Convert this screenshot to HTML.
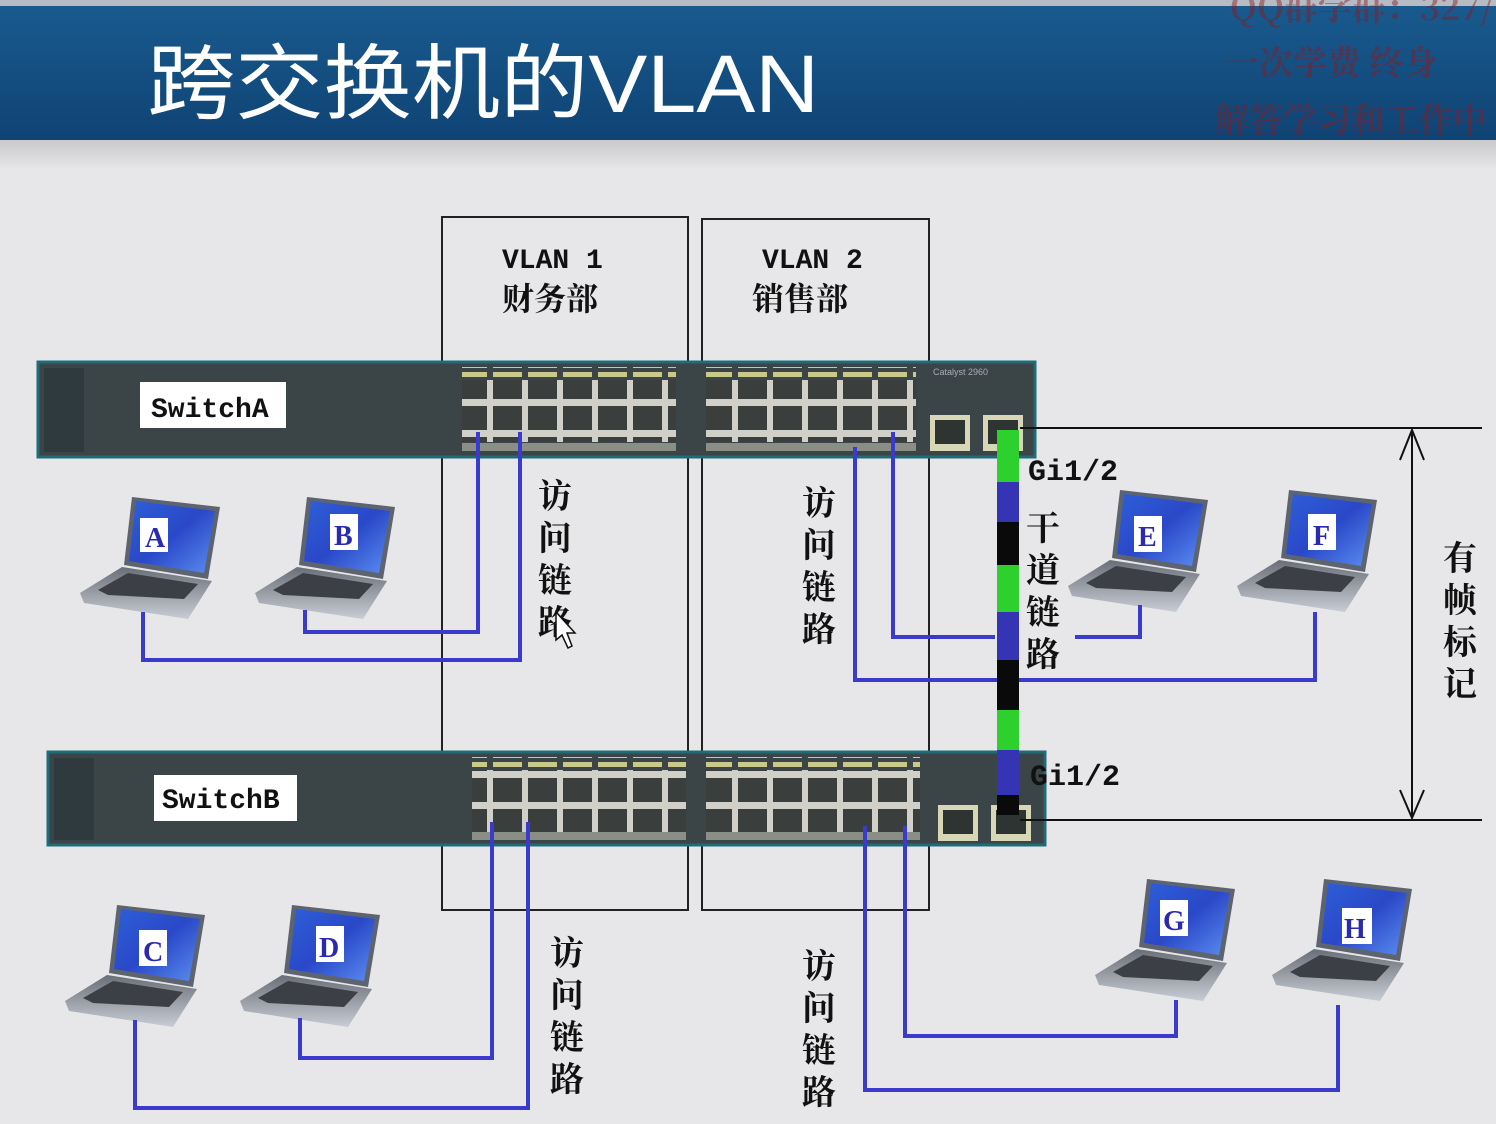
<!DOCTYPE html>
<html><head><meta charset="utf-8"><style>
html,body{margin:0;padding:0;}
body{width:1496px;height:1124px;overflow:hidden;background:#e7e7e9;}
svg{display:block}
.cj{font-family:"Liberation Serif","Noto Serif CJK SC","Noto Sans CJK SC",serif;font-weight:bold;}
.mono{font-family:"Liberation Mono","DejaVu Sans Mono",monospace;font-weight:bold;}
</style></head><body>
<svg width="1496" height="1124" viewBox="0 0 1496 1124" xmlns="http://www.w3.org/2000/svg">
<defs>
<linearGradient id="hdr" x1="0" y1="0" x2="0" y2="1">
<stop offset="0" stop-color="#195a8e"/><stop offset="1" stop-color="#0f4374"/></linearGradient>
<linearGradient id="shade" x1="0" y1="0" x2="0" y2="1">
<stop offset="0" stop-color="#c9c9cb"/><stop offset="1" stop-color="#e7e7e9"/></linearGradient>
<linearGradient id="scr" x1="0" y1="0" x2="1" y2="1">
<stop offset="0" stop-color="#2e5fd8"/><stop offset=".5" stop-color="#2a48c8"/><stop offset="1" stop-color="#5b8df0"/></linearGradient>
<linearGradient id="base" x1="0" y1="0" x2="0" y2="1">
<stop offset="0" stop-color="#6a6e78"/><stop offset="1" stop-color="#c8ccd4"/></linearGradient>
<pattern id="port" width="35" height="31" patternUnits="userSpaceOnUse">
<rect x="0" y="0" width="35" height="31" fill="#d0d0c8"/>
<rect x="3" y="3" width="29" height="24" fill="#3a3e3c"/>
</pattern>
<pattern id="led" width="35" height="10" patternUnits="userSpaceOnUse">
<rect x="3" y="2" width="29" height="6" fill="#c9c98a"/>
</pattern>
<g id="lap">
<polygon points="0,98 42,72 132,86 108,124 4,108" fill="url(#base)"/>
<polygon points="18,95 48,78 118,89 104,104 28,100" fill="#3c3f46"/>
<polygon points="52,2 140,12 128,84 44,70" fill="#5d6470"/>
<polygon points="56,6 135,16 124,78 49,66" fill="url(#scr)"/>
</g>
</defs>
<rect x="0" y="0" width="1496" height="8" fill="#b7bbc3"/>
<rect x="0" y="6" width="1496" height="134" fill="url(#hdr)"/>
<rect x="0" y="140" width="1496" height="30" fill="url(#shade)"/>
<text x="147" y="112" fill="#ffffff" font-family="Liberation Sans,'Noto Sans CJK SC',sans-serif" font-size="82" textLength="672" lengthAdjust="spacingAndGlyphs">跨交换机的VLAN</text>
<g fill="#8a1a20" opacity=".45" font-family="'Noto Serif CJK SC',serif" font-size="34" font-weight="bold">
<text x="1230" y="20">QQ群学群：327/</text>
<text x="1225" y="75">一次学费  终身</text>
<text x="1215" y="132">解答学习和工作中</text></g>

<rect x="442" y="217" width="246" height="693" fill="none" stroke="#222" stroke-width="2"/>
<rect x="702" y="219" width="227" height="691" fill="none" stroke="#222" stroke-width="2"/>
<text x="502" y="268" class="mono" font-size="28" fill="#111">VLAN 1</text>
<text x="502" y="310" class="cj" font-size="32" fill="#111">财务部</text>
<text x="762" y="268" class="mono" font-size="28" fill="#111">VLAN 2</text>
<text x="752" y="310" class="cj" font-size="32" fill="#111">销售部</text>

<rect x="38" y="362" width="997" height="95" fill="#3b4548" stroke="#1f6c78" stroke-width="3"/>
<rect x="44" y="368" width="40" height="84" fill="#2e3a3e"/>
<rect x="140" y="382" width="146" height="46" fill="#fff"/>
<text x="151" y="417" class="mono" font-size="28" fill="#111">SwitchA</text>
<rect x="462" y="367" width="214" height="10" fill="url(#led)"/>
<rect x="706" y="367" width="210" height="10" fill="url(#led)"/>
<rect x="462" y="380" width="214" height="62" fill="url(#port)"/>
<rect x="706" y="380" width="210" height="62" fill="url(#port)"/>
<rect x="462" y="443" width="214" height="8" fill="#8a8f86"/>
<rect x="706" y="443" width="210" height="8" fill="#8a8f86"/>
<rect x="930" y="415" width="40" height="36" fill="#d7d7b8"/><rect x="935" y="420" width="30" height="24" fill="#2e3432"/>
<rect x="983" y="415" width="40" height="36" fill="#d7d7b8"/><rect x="988" y="420" width="30" height="24" fill="#2e3432"/>
<text x="933" y="375" font-size="9" fill="#aab" font-family="Liberation Sans,sans-serif">Catalyst 2960</text>

<rect x="48" y="752" width="997" height="93" fill="#3b4548" stroke="#1f6c78" stroke-width="3"/>
<rect x="54" y="758" width="40" height="82" fill="#2e3a3e"/>
<rect x="154" y="775" width="143" height="46" fill="#fff"/>
<text x="162" y="808" class="mono" font-size="28" fill="#111">SwitchB</text>
<rect x="472" y="757" width="214" height="10" fill="url(#led)"/>
<rect x="706" y="757" width="214" height="10" fill="url(#led)"/>
<rect x="472" y="770" width="214" height="62" fill="url(#port)"/>
<rect x="706" y="770" width="214" height="62" fill="url(#port)"/>
<rect x="472" y="832" width="214" height="8" fill="#8a8f86"/>
<rect x="706" y="832" width="214" height="8" fill="#8a8f86"/>
<rect x="938" y="805" width="40" height="36" fill="#d7d7b8"/><rect x="943" y="810" width="30" height="24" fill="#2e3432"/>
<rect x="991" y="805" width="40" height="36" fill="#d7d7b8"/><rect x="996" y="810" width="30" height="24" fill="#2e3432"/>

<use href="#lap" x="80" y="495"/><rect x="140" y="518" width="28" height="34" fill="#fff"/><text x="145" y="547" class="cj" font-size="28" fill="#2a2ab0">A</text>
<use href="#lap" x="255" y="495"/><rect x="330" y="514" width="28" height="36" fill="#fff"/><text x="334" y="545" class="cj" font-size="28" fill="#2a2ab0">B</text>
<use href="#lap" x="1068" y="488"/><rect x="1134" y="516" width="28" height="36" fill="#fff"/><text x="1138" y="546" class="cj" font-size="28" fill="#2a2ab0">E</text>
<use href="#lap" x="1237" y="488"/><rect x="1308" y="514" width="28" height="36" fill="#fff"/><text x="1313" y="545" class="cj" font-size="28" fill="#2a2ab0">F</text>
<use href="#lap" x="65" y="903"/><rect x="139" y="930" width="28" height="36" fill="#fff"/><text x="143" y="961" class="cj" font-size="28" fill="#2a2ab0">C</text>
<use href="#lap" x="240" y="903"/><rect x="316" y="926" width="28" height="36" fill="#fff"/><text x="319" y="957" class="cj" font-size="28" fill="#2a2ab0">D</text>
<use href="#lap" x="1095" y="877"/><rect x="1160" y="900" width="28" height="36" fill="#fff"/><text x="1163" y="930" class="cj" font-size="28" fill="#2a2ab0">G</text>
<use href="#lap" x="1272" y="877"/><rect x="1342" y="908" width="30" height="36" fill="#fff"/><text x="1344" y="938" class="cj" font-size="28" fill="#2a2ab0">H</text>

<g fill="none" stroke="#3a3acc" stroke-width="4">
<polyline points="143,612 143,660 520,660 520,432"/>
<polyline points="305,610 305,632 478,632 478,432"/>
<polyline points="893,432 893,637 995,637"/>
<polyline points="1075,637 1140,637 1140,605"/>
<polyline points="855,447 855,680 1315,680 1315,612"/>
<polyline points="135,1020 135,1108 528,1108 528,822"/>
<polyline points="300,1018 300,1058 492,1058 492,822"/>
<polyline points="1176,1000 1176,1036 905,1036 905,826"/>
<polyline points="1338,1005 1338,1090 865,1090 865,826"/>
</g>

<rect x="997" y="430" width="22" height="52" fill="#2ed02e"/>
<rect x="997" y="482" width="22" height="40" fill="#3434b4"/>
<rect x="997" y="522" width="22" height="43" fill="#0a0a0a"/>
<rect x="997" y="565" width="22" height="47" fill="#2ed02e"/>
<rect x="997" y="612" width="22" height="48" fill="#3434b4"/>
<rect x="997" y="660" width="22" height="50" fill="#0a0a0a"/>
<rect x="997" y="710" width="22" height="40" fill="#2ed02e"/>
<rect x="997" y="750" width="22" height="45" fill="#3434b4"/>
<rect x="997" y="795" width="22" height="20" fill="#0a0a0a"/>

<text x="1028" y="480" class="mono" font-size="30" fill="#111">Gi1/2</text>
<text x="1030" y="785" class="mono" font-size="30" fill="#111">Gi1/2</text>
<g class="cj" font-size="34" fill="#111">
<text x="538" y="508">访</text><text x="538" y="550">问</text><text x="538" y="592">链</text><text x="538" y="634">路</text>
<text x="802" y="515">访</text><text x="802" y="557">问</text><text x="802" y="599">链</text><text x="802" y="641">路</text>
<text x="1026" y="540">干</text><text x="1026" y="582">道</text><text x="1026" y="624">链</text><text x="1026" y="666">路</text>
<text x="1443" y="570">有</text><text x="1443" y="612">帧</text><text x="1443" y="654">标</text><text x="1443" y="696">记</text>
<text x="550" y="965">访</text><text x="550" y="1007">问</text><text x="550" y="1049">链</text><text x="550" y="1091">路</text>
<text x="802" y="978">访</text><text x="802" y="1020">问</text><text x="802" y="1062">链</text><text x="802" y="1104">路</text>
</g>
<polygon points="556,612 556,640 562,635 568,648 572,646 567,633 575,633" fill="#fff" stroke="#111" stroke-width="1.5"/>

<g stroke="#111" stroke-width="2" fill="none">
<line x1="1020" y1="428" x2="1482" y2="428"/>
<line x1="1020" y1="820" x2="1482" y2="820"/>
<line x1="1412" y1="430" x2="1412" y2="818"/>
<polyline points="1400,460 1412,430 1424,460"/>
<polyline points="1400,790 1412,818 1424,790"/>
</g>
</svg>
</body></html>
